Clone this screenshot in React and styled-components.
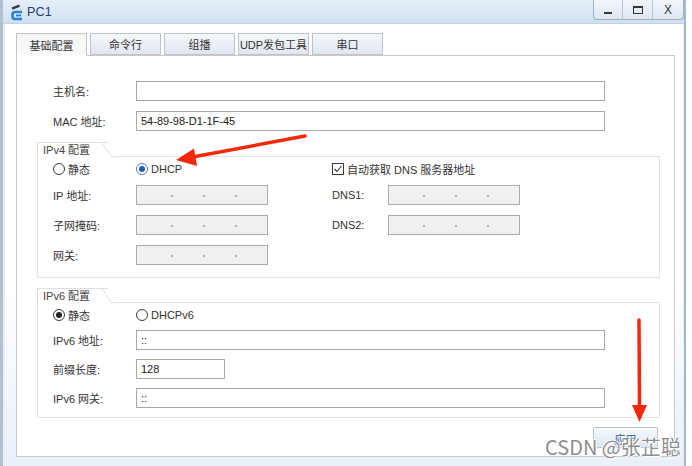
import React from 'react';
import styled, { createGlobalStyle } from 'styled-components';

const Global = createGlobalStyle`
  html, body { margin: 0; padding: 0; background: #ffffff; }
  body { font-family: "Liberation Sans", "Noto Sans CJK SC", sans-serif; }
  * { box-sizing: border-box; }
`;

const Window = styled.div`
  position: relative;
  width: 686px;
  height: 466px;
  display: flex;
  flex-direction: column;
  background: #e8eff9;
  border-left: 3px solid #b3c1cf;
  border-right: 2px solid #a3b8cf;
  overflow: hidden;
`;

const TitleBar = styled.div`
  height: 24px;
  flex: none;
  display: flex;
  align-items: flex-start;
  background: linear-gradient(#e6eff9, #d0e0f1);
  border-bottom: 1px solid #c3d3e4;
`;

const TitleIcon = styled.svg`
  width: 14px;
  height: 17px;
  margin: 4px 3px 0 7px;
  flex: none;
`;

const TitleText = styled.div`
  margin-top: 5px;
  font: 12.5px "Liberation Sans", sans-serif;
  color: #1e3f70;
  letter-spacing: 0.2px;
`;

const WinButtons = styled.div`
  margin-left: auto;
  display: flex;
  height: 20px;
  border: 1px solid #9fb0c3;
  border-top: none;
  border-radius: 0 0 4px 4px;
  background: linear-gradient(#f2f6fb, #dde7f2);
  overflow: hidden;
`;

const WinButton = styled.div`
  width: ${p => p.$w}px;
  display: flex;
  align-items: center;
  justify-content: center;
  border-left: ${p => (p.$first ? 'none' : '1px solid #b7c4d3')};
  font: 12px "Liberation Sans", sans-serif;
  color: #3a3a3a;
`;

const Client = styled.div`
  flex: 1;
  margin: 0 1px 0 2px;
  padding: 9px 8px 0 11px;
  background: linear-gradient(#ffffff 0%, #ffffff 60%, #e9f0fa 100%);
  display: flex;
  flex-direction: column;
`;

const TabBar = styled.div`
  display: flex;
  gap: 3px;
  height: 22px;
  position: relative;
  z-index: 1;
`;

const Tab = styled.div`
  width: 71px;
  height: ${p => (p.$active ? '23px' : '22px')};
  display: flex;
  align-items: center;
  justify-content: center;
  font-size: 11px;
  color: #333;
  border: 1px solid ${p => (p.$active ? '#c4c4c4' : '#b9c4d1')};
  border-bottom: ${p => (p.$active ? '1px solid #fbfbfb' : '1px solid #c4c4c4')};
  background: ${p => (p.$active ? 'linear-gradient(#f4f4f4, #fbfbfb)' : 'linear-gradient(#f6f8fb, #dfe7f1)')};
`;

const Panel = styled.div`
  height: 402px;
  border: 1px solid #c8c8c8;
  background: #ffffff;
  padding: 25px 16px 0 20px;
  display: flex;
  flex-direction: column;
`;

const FormRow = styled.div`
  display: grid;
  grid-template-columns: 83px 469px;
  align-items: center;
  margin-left: 16px;
  margin-top: ${p => p.$mt || 0}px;
`;

const Label = styled.div`
  font-size: 11px;
  color: #333;
  white-space: nowrap;
`;

const TextBox = styled.div`
  width: ${p => p.$w || 469}px;
  height: 20px;
  border: 1px solid #a8a8a8;
  background: #ffffff;
  padding-left: 4px;
  display: flex;
  align-items: center;
  font-size: 11px;
  color: #222;
`;

const IpBox = styled.div`
  width: 132px;
  height: 20px;
  border: 1px solid #acacac;
  background: #f0f0f0;
  display: flex;
  align-items: center;
  padding: 2px 0 0 34px;
  gap: 30px;
`;

const Dot = styled.span`
  width: 2px;
  height: 2px;
  background: #a0a0a0;
  border-radius: 1px;
`;

const Group = styled.div`
  width: 623px;
  margin-top: ${p => p.$mt}px;
  display: flex;
  flex-direction: column;
  align-items: flex-start;
`;

const GroupTab = styled.div`
  position: relative;
  height: 15px;
  padding: 0 18px 0 5px;
  border: 1px solid #e0e0e0;
  border-bottom: none;
  border-right: none;
  background: #ffffff;
  font-size: 11px;
  line-height: 14px;
  color: #444;
  z-index: 1;
  &::after {
    content: '';
    position: absolute;
    top: -1px;
    right: -5px;
    width: 10px;
    height: 15px;
    border-top: 1px solid #e0e0e0;
    border-right: 1px solid #e0e0e0;
    background: #ffffff;
    transform: skewX(34deg);
    transform-origin: bottom left;
  }
`;

const GroupBox = styled.div`
  align-self: stretch;
  margin-top: -1px;
  border: 1px solid #e3e3e3;
  padding: 6px 0 ${p => p.$pb}px 15px;
  display: grid;
  grid-template-columns: ${p => p.$cols};
  row-gap: ${p => p.$gap}px;
  align-items: center;
`;

const Choice = styled.div`
  display: flex;
  align-items: center;
  gap: 3px;
  height: 12px;
  font-size: 11px;
  color: #333;
  white-space: nowrap;
  grid-column: ${p => p.$span || 'auto'};
`;

const Radio = styled.span`
  width: 12px;
  height: 12px;
  border-radius: 50%;
  border: 1px solid ${p => (p.$blue ? '#5a7ea8' : '#3a3a3a')};
  background: #fff;
  display: flex;
  align-items: center;
  justify-content: center;
  flex: none;
  &::after {
    content: '';
    display: ${p => (p.$on ? 'block' : 'none')};
    width: 6px;
    height: 6px;
    border-radius: 50%;
    background: ${p => (p.$blue ? '#1e5bb8' : '#262626')};
  }
`;

const Check = styled.svg`
  width: 12px;
  height: 12px;
  flex: none;
`;

const ApplyButton = styled.div`
  align-self: flex-end;
  margin-top: 9px;
  width: 65px;
  height: 21px;
  border: 1px solid #b4c3d5;
  border-radius: 2px;
  background: linear-gradient(#f6f9fc, #dbe5f1);
  display: flex;
  align-items: flex-start;
  padding-top: 3px;
  justify-content: center;
  font-size: 11px;
  color: #2f5d9c;
`;

const Overlay = styled.svg`
  position: absolute;
  left: -3px;
  top: 0;
  width: 692px;
  height: 466px;
  pointer-events: none;
  z-index: 5;
`;

const Watermark = styled.div`
  position: absolute;
  left: 542px;
  top: 434px;
  font: 20px "Noto Sans CJK SC", sans-serif;
  line-height: 26px;
  color: #8e8e8e;
  white-space: nowrap;
  text-shadow: 0 0 2px #fff, 0 0 2px #fff, 1px 1px 0 #fff, -1px -1px 0 #fff;
  z-index: 6;
`;

const Dots = () => (
  <IpBox>
    <Dot />
    <Dot />
    <Dot />
  </IpBox>
);

const tabs = ['基础配置', '命令行', '组播', 'UDP发包工具', '串口'];

export default function App() {
  return (
    <>
      <Global />
      <Window>
        <TitleBar>
          <TitleIcon viewBox="0 0 14 17">
            <polygon points="1.5,3.5 9,0.5 10,2.8 2.5,5.8" fill="#3b3b3b" />
            <path d="M12 8 H5 Q2.5 8 2.5 10.5 V12.5 Q2.5 15 5 15 H12" fill="none" stroke="#2b7fd3" strokeWidth="2.6" />
            <path d="M6 11.5 H11" stroke="#2b7fd3" strokeWidth="1.8" />
          </TitleIcon>
          <TitleText>PC1</TitleText>
          <WinButtons>
            <WinButton $w={28} $first>
              <svg width="10" height="10" viewBox="0 0 10 10"><rect x="1" y="7" width="8" height="2" fill="#333" /></svg>
            </WinButton>
            <WinButton $w={30}>
              <svg width="10" height="10" viewBox="0 0 10 10"><rect x="0.5" y="1.5" width="9" height="7" fill="none" stroke="#333" strokeWidth="1" /><rect x="0.5" y="1" width="9" height="2" fill="#333" /></svg>
            </WinButton>
            <WinButton $w={31}>X</WinButton>
          </WinButtons>
        </TitleBar>
        <Client>
          <TabBar>
            {tabs.map((t, i) => (
              <Tab key={t} $active={i === 0}>{t}</Tab>
            ))}
          </TabBar>
          <Panel>
            <FormRow>
              <Label>主机名:</Label>
              <TextBox />
            </FormRow>
            <FormRow $mt={10}>
              <Label>MAC 地址:</Label>
              <TextBox>54-89-98-D1-1F-45</TextBox>
            </FormRow>

            <Group $mt={11}>
              <GroupTab>IPv4 配置</GroupTab>
              <GroupBox $cols="83px 196px 56px 132px" $gap={10} $pb={12}>
                <Choice><Radio />静态</Choice>
                <Choice><Radio $on $blue />DHCP</Choice>
                <Choice $span="3 / span 2">
                  <Check viewBox="0 0 12 12">
                    <rect x="0.5" y="0.5" width="11" height="11" fill="#fff" stroke="#3a3a3a" />
                    <path d="M2.5 6 L5 8.5 L9.5 3" fill="none" stroke="#333" strokeWidth="1.1" />
                  </Check>
                  自动获取 DNS 服务器地址
                </Choice>
                <Label>IP 地址:</Label>
                <Dots />
                <Label>DNS1:</Label>
                <Dots />
                <Label>子网掩码:</Label>
                <Dots />
                <Label>DNS2:</Label>
                <Dots />
                <Label>网关:</Label>
                <Dots />
              </GroupBox>
            </Group>

            <Group $mt={10}>
              <GroupTab>IPv6 配置</GroupTab>
              <GroupBox $cols="83px 469px" $gap={9} $pb={9}>
                <Choice><Radio $on />静态</Choice>
                <Choice><Radio />DHCPv6</Choice>
                <Label>IPv6 地址:</Label>
                <TextBox>::</TextBox>
                <Label>前缀长度:</Label>
                <TextBox $w={89}>128</TextBox>
                <Label>IPv6 网关:</Label>
                <TextBox>::</TextBox>
              </GroupBox>
            </Group>

            <ApplyButton>应用</ApplyButton>
          </Panel>
        </Client>

        <Overlay viewBox="0 0 692 466">
          <line x1="305" y1="136" x2="190" y2="157.5" stroke="#f4280c" strokeWidth="3.5" strokeLinecap="round" />
          <polygon points="176,160 194,148.5 197,166" fill="#f4280c" />
          <line x1="639" y1="320" x2="639.5" y2="408" stroke="#f4280c" strokeWidth="3.5" strokeLinecap="round" />
          <polygon points="632,405 647,405 639.5,422" fill="#f4280c" />
        </Overlay>
        <Watermark>CSDN @张芷聪</Watermark>
      </Window>
    </>
  );
}
